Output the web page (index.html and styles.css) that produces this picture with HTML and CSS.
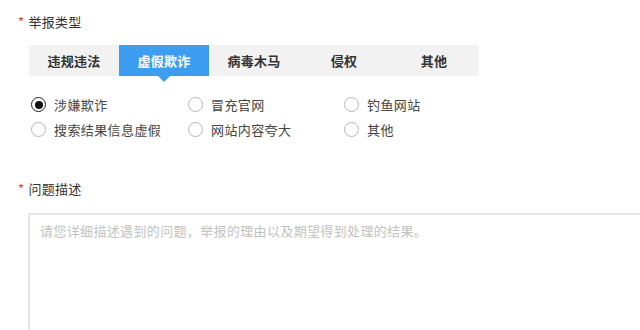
FILE: index.html
```html
<!DOCTYPE html>
<html lang="zh-CN">
<head>
<meta charset="utf-8">
<link rel="stylesheet" href="styles.css">
</head>
<body>
<div class="form">
  <div class="field-label"><span class="req">*</span>举报类型</div>
  <div class="tabs">
    <div class="tab">违规违法</div>
    <div class="tab active">虚假欺诈</div>
    <div class="tab">病毒木马</div>
    <div class="tab">侵权</div>
    <div class="tab">其他</div>
  </div>
  <div class="radios">
    <label class="radio checked"><span class="circle"></span>涉嫌欺诈</label>
    <label class="radio"><span class="circle"></span>冒充官网</label>
    <label class="radio"><span class="circle"></span>钓鱼网站</label>
    <label class="radio"><span class="circle"></span>搜索结果信息虚假</label>
    <label class="radio"><span class="circle"></span>网站内容夸大</label>
    <label class="radio"><span class="circle"></span>其他</label>
  </div>
  <div class="field-label second"><span class="req">*</span>问题描述</div>
  <textarea class="desc" placeholder="请您详细描述遇到的问题，举报的理由以及期望得到处理的结果。"></textarea>
</div>
</body>
</html>
```
FILE: styles.css
```css
html, body {
  margin: 0;
  padding: 0;
  background: #fff;
  overflow: hidden;
}
body {
  font-family: "Noto Sans CJK SC", "Noto Sans", sans-serif;
  font-size: 13px;
  color: #333;
  width: 640px;
  height: 330px;
}
.form {
  padding: 12px 0 0 18px;
}
.field-label {
  line-height: 20px;
  height: 20px;
  color: #333;
  letter-spacing: 0.3px;
}
.req {
  color: #e4393c;
  margin-right: 4px;
}
.tabs {
  display: flex;
  margin: 13px 0 0 11px;
  width: 450px;
  height: 31px;
  background: #f2f2f2;
}
.tab {
  position: relative;
  width: 90px;
  line-height: 31px;
  text-align: center;
  font-weight: bold;
  color: #333;
  letter-spacing: 0.3px;
}
.tab.active {
  background: #3d9df0;
  color: #fff;
}
.tab.active::after {
  content: "";
  position: absolute;
  left: 50%;
  top: 31px;
  margin-left: -6px;
  border-left: 6px solid transparent;
  border-right: 6px solid transparent;
  border-top: 6px solid #3d9df0;
}
.radios {
  display: grid;
  grid-template-columns: 157px 156px 156px;
  grid-auto-rows: 25px;
  margin: 16px 0 0 13px;
}
.radio {
  display: flex;
  align-items: center;
  color: #444;
  letter-spacing: 0.4px;
}
.circle {
  box-sizing: border-box;
  width: 15px;
  height: 15px;
  border: 1px solid #b5b5b5;
  border-radius: 50%;
  margin-right: 8px;
  position: relative;
}
.radio.checked .circle {
  border-color: #222;
}
.radio.checked .circle::after {
  content: "";
  position: absolute;
  left: 2.5px;
  top: 2.5px;
  width: 8px;
  height: 8px;
  border-radius: 50%;
  background: #111;
}
.second {
  margin-top: 37px;
}
.desc {
  display: block;
  box-sizing: border-box;
  margin: 14px 0 0 10px;
  width: 614px;
  height: 119px;
  border: 2px solid #e6e6e6;
  padding: 6px 10px;
  font-family: "Noto Sans CJK SC", "Noto Sans", sans-serif;
  font-size: 13px;
  line-height: 20px;
  letter-spacing: 0.35px;
  resize: none;
  outline: none;
}
.desc::placeholder {
  color: #c2c2c2;
}
```
